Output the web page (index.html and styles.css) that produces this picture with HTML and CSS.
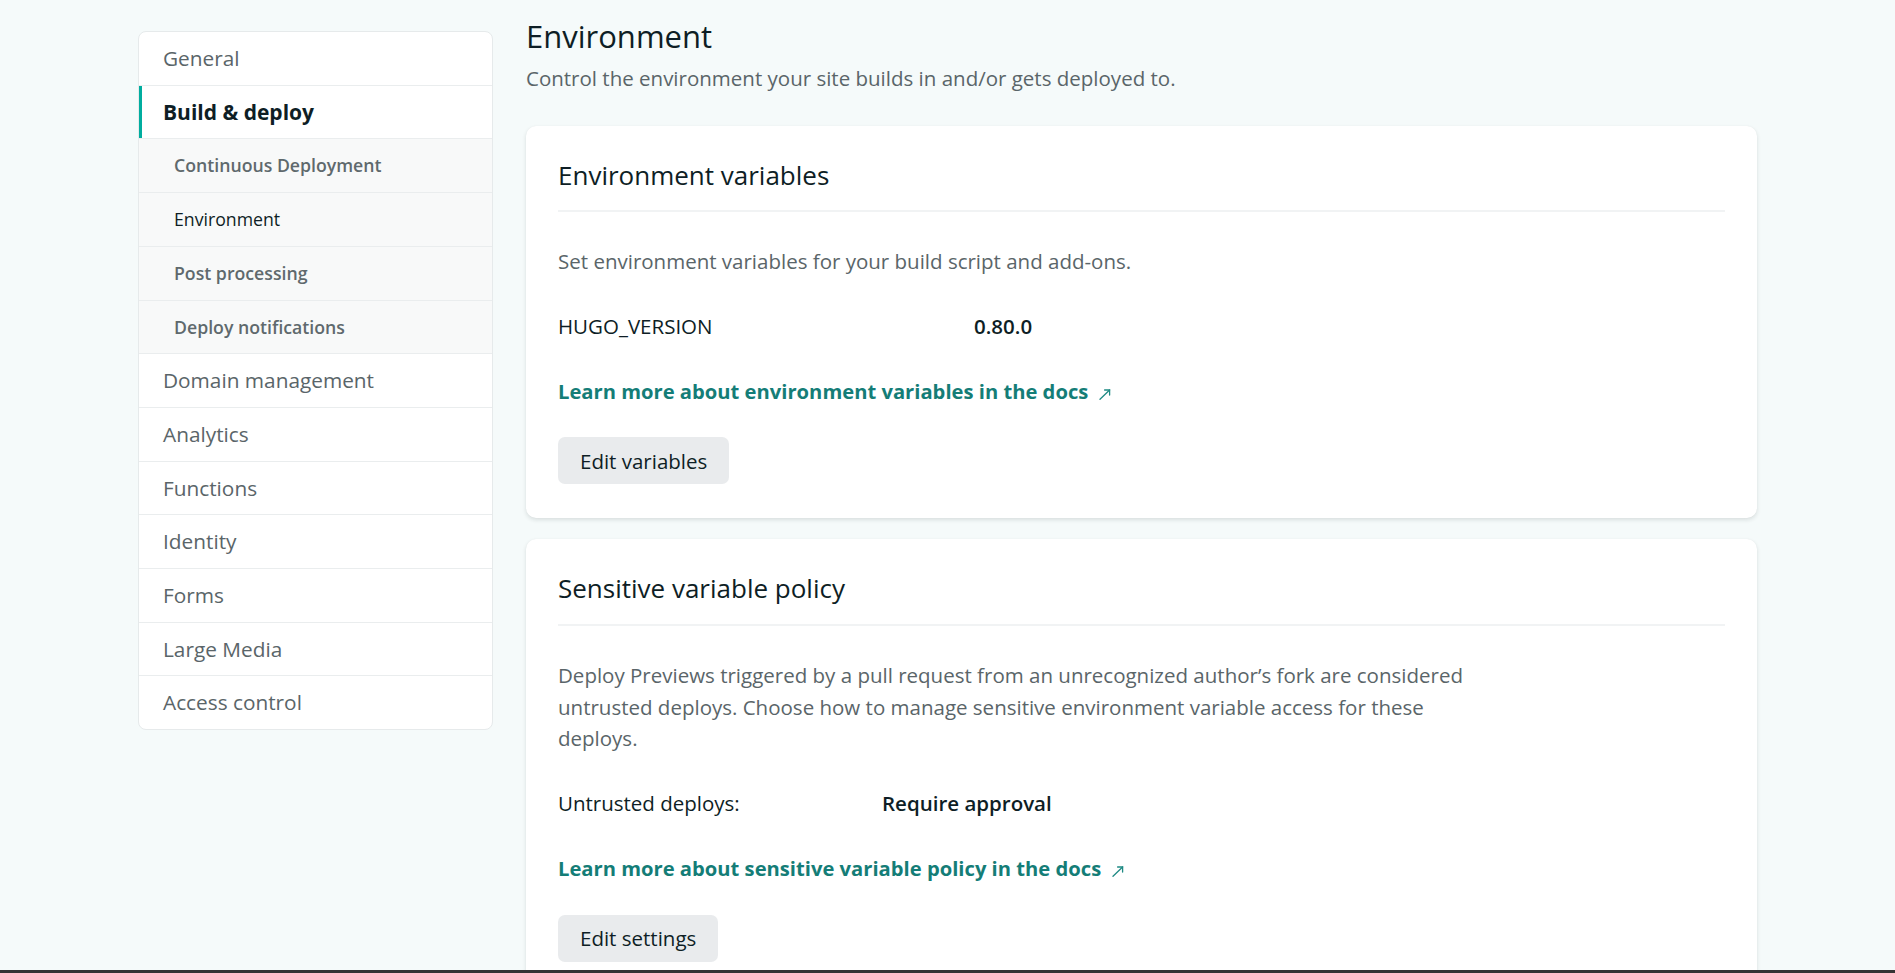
FILE: index.html
```html
<!DOCTYPE html>
<html lang="en">
<head>
<meta charset="utf-8">
<title>Build &amp; deploy · Environment</title>
<link rel="stylesheet" href="styles.css">
</head>
<body>
<div class="page">
  <nav class="sidenav">
    <a class="nav-item">General</a>
    <a class="nav-item active">Build &amp; deploy</a>
    <a class="nav-sub">Continuous Deployment</a>
    <a class="nav-sub current">Environment</a>
    <a class="nav-sub">Post processing</a>
    <a class="nav-sub">Deploy notifications</a>
    <a class="nav-item">Domain management</a>
    <a class="nav-item">Analytics</a>
    <a class="nav-item">Functions</a>
    <a class="nav-item">Identity</a>
    <a class="nav-item">Forms</a>
    <a class="nav-item">Large Media</a>
    <a class="nav-item last">Access control</a>
  </nav>

  <main class="content">
    <h1 class="page-title">Environment</h1>
    <p class="lead">Control the environment your site builds in and/or gets deployed to.</p>

    <section class="card">
      <h2 class="card-title">Environment variables</h2>
      <div class="card-body">
        <p class="desc">Set environment variables for your build script and add-ons.</p>
        <dl class="kv kv-wide">
          <dt>HUGO_VERSION</dt>
          <dd>0.80.0</dd>
        </dl>
        <a class="doc-link">Learn more about environment variables in the docs<svg class="ext" width="12" height="11" viewBox="0 0 12 11" fill="none" stroke="currentColor" stroke-width="1.3" stroke-linecap="round"><path d="M1 10.2 L10.6 1"/><path d="M5.6 1 H10.6 V6"/></svg></a>
        <button class="btn">Edit variables</button>
      </div>
    </section>

    <section class="card card-second">
      <h2 class="card-title">Sensitive variable policy</h2>
      <div class="card-body">
        <p class="desc wrap">Deploy Previews triggered by a pull request from an unrecognized author’s fork are considered untrusted deploys. Choose how to manage sensitive environment variable access for these deploys.</p>
        <dl class="kv kv-narrow">
          <dt>Untrusted deploys:</dt>
          <dd>Require approval</dd>
        </dl>
        <a class="doc-link">Learn more about sensitive variable policy in the docs<svg class="ext" width="12" height="11" viewBox="0 0 12 11" fill="none" stroke="currentColor" stroke-width="1.3" stroke-linecap="round"><path d="M1 10.2 L10.6 1"/><path d="M5.6 1 H10.6 V6"/></svg></a>
        <button class="btn">Edit settings</button>
      </div>
    </section>
  </main>
</div>
<div class="taskbar"></div>
</body>
</html>
```

FILE: styles.css
```css
* { box-sizing: border-box; }

html, body {
  margin: 0;
  height: 100%;
  overflow: hidden;
}

body {
  background: #f5fafa;
  font-family: "Open Sans", "Noto Sans", sans-serif;
  color: #0e1e25;
}

.page {
  display: flex;
  align-items: flex-start;
  gap: 33px;
  padding-left: 138px;
}

/* ---------- side navigation ---------- */
.sidenav {
  width: 355px;
  margin-top: 31px;
  background: #fff;
  border: 1px solid #e6eaeb;
  border-radius: 8px;
  overflow: hidden;
  display: flex;
  flex-direction: column;
}

.nav-item,
.nav-sub {
  display: block;
  border-bottom: 1px solid #eaedee;
  padding: 12px 24px;
  line-height: 28.7px;
  color: #5a6569;
  text-decoration: none;
}

.nav-item {
  font-size: 20.8px;
  font-weight: 500;
}

.nav-item.last { border-bottom: none; }

.nav-item.active {
  font-size: 21px;
  font-weight: 700;
  color: #0e1e25;
  box-shadow: inset 3px 0 0 #00ad9f;
}

.nav-sub {
  background: #f8f9f9;
  font-size: 17.7px;
  font-weight: 600;
  padding-left: 35px;
  color: #5f696d;
}

.nav-sub.current {
  color: #0e1e25;
  font-weight: 500;
}

/* ---------- main content ---------- */
.content {
  width: 1231px;
  padding-top: 18px;
}

.page-title {
  margin: 0;
  font-size: 31px;
  line-height: 36px;
  font-weight: 500;
  color: #0e1e25;
}

.lead {
  margin: 10px 0 0;
  font-size: 20.5px;
  line-height: 28px;
  color: #5a6569;
}

.card {
  margin-top: 33.5px;
  background: #fff;
  border-radius: 10px;
  box-shadow: 0 2px 4px rgba(14, 30, 37, 0.12), 0 0 1px rgba(14, 30, 37, 0.06);
  padding: 32px 32px 34px;
}

.card-second {
  margin-top: 21px;
}

.card-title {
  margin: 0;
  font-size: 26px;
  line-height: 34px;
  font-weight: 500;
  color: #0e1e25;
  padding-bottom: 18.7px;
  border-bottom: 2px solid #f1f3f4;
}

.card-body {
  display: flex;
  flex-direction: column;
  align-items: flex-start;
  font-size: 20.5px;
  line-height: 31.7px;
}

.desc {
  margin: 34px 0 0;
  color: #5a6569;
}

.desc.wrap {
  max-width: 915px;
}

.kv {
  display: flex;
  margin: 33px 0 0;
}

.kv dt {
  color: #0e1e25;
}

.kv dd {
  margin: 0;
  font-weight: 600;
  color: #0e1e25;
}

.kv-wide dt { width: 416px; }
.kv-narrow dt { width: 324px; }

.doc-link {
  margin-top: 33px;
  display: inline-flex;
  align-items: center;
  gap: 11px;
  font-size: 20.2px;
  font-weight: 700;
  color: #147d77;
  text-decoration: none;
}

.ext {
  margin-top: 6px;
  color: #1f8a84;
}

.btn {
  margin-top: 30px;
  height: 47px;
  padding: 0 22px;
  border: none;
  border-radius: 7px;
  background: #e9ebed;
  font-family: inherit;
  font-size: 20.5px;
  font-weight: 500;
  color: #0e1e25;
}

.taskbar {
  position: fixed;
  left: 0;
  right: 0;
  bottom: 0;
  height: 3px;
  background: #343434;
}
```
